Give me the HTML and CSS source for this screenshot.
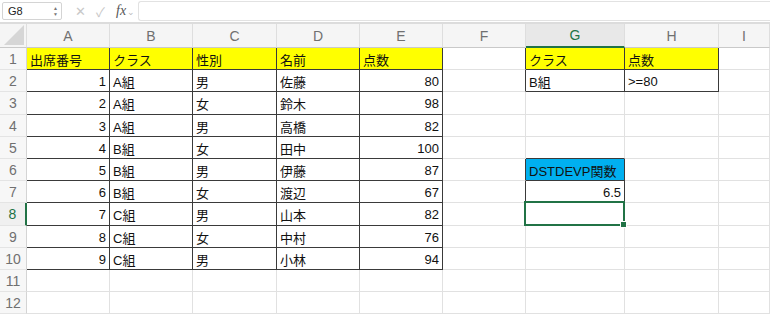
FILE: index.html
```html
<!DOCTYPE html>
<html>

<head>
  <title>DSTDEVP</title>
  <link rel="stylesheet" href="styles.css">
</head>

<body>

  <div class="toolbar">
    <div class="name-box">
      <span>G8</span>
      <span class="spin">&#9650;<br>&#9660;</span>
    </div>
    <span class="tool-icon">&#x2715;</span>
    <span class="tool-icon">&#x2713;</span>
    <span class="fx"><i>fx</i><small>&#x2304;</small></span>
    <div class="formula-input"></div>
  </div>

  <div class="sheet">
    <div class="row head">
      <div class="corner">
        <svg width="20" height="20" viewBox="0 0 20 20"><polygon points="20,0 20,20 0,20" fill="#d6d6d6"/></svg>
      </div>
      <div class="col">A</div>
      <div class="col">B</div>
      <div class="col">C</div>
      <div class="col">D</div>
      <div class="col">E</div>
      <div class="col">F</div>
      <div class="col sel">G</div>
      <div class="col">H</div>
      <div class="col">I</div>
    </div>

    <div class="row">
      <div class="num">1</div>
      <div class="c y br bb">出席番号</div>
      <div class="c y br bb">クラス</div>
      <div class="c y br bb">性別</div>
      <div class="c y br bb">名前</div>
      <div class="c y br bb">点数</div>
      <div class="c br"></div>
      <div class="c y br bb">クラス</div>
      <div class="c y br bb">点数</div>
      <div class="c"></div>
    </div>

    <div class="row">
      <div class="num">2</div>
      <div class="c r br bb">1</div>
      <div class="c br bb">A組</div>
      <div class="c br bb">男</div>
      <div class="c br bb">佐藤</div>
      <div class="c r br bb">80</div>
      <div class="c br"></div>
      <div class="c br bb">B組</div>
      <div class="c br bb">&gt;=80</div>
      <div class="c"></div>
    </div>

    <div class="row">
      <div class="num">3</div>
      <div class="c r br bb">2</div>
      <div class="c br bb">A組</div>
      <div class="c br bb">女</div>
      <div class="c br bb">鈴木</div>
      <div class="c r br bb">98</div>
      <div class="c"></div>
      <div class="c"></div>
      <div class="c"></div>
      <div class="c"></div>
    </div>

    <div class="row">
      <div class="num">4</div>
      <div class="c r br bb">3</div>
      <div class="c br bb">A組</div>
      <div class="c br bb">男</div>
      <div class="c br bb">高橋</div>
      <div class="c r br bb">82</div>
      <div class="c"></div>
      <div class="c"></div>
      <div class="c"></div>
      <div class="c"></div>
    </div>

    <div class="row">
      <div class="num">5</div>
      <div class="c r br bb">4</div>
      <div class="c br bb">B組</div>
      <div class="c br bb">女</div>
      <div class="c br bb">田中</div>
      <div class="c r br bb">100</div>
      <div class="c"></div>
      <div class="c bb"></div>
      <div class="c"></div>
      <div class="c"></div>
    </div>

    <div class="row">
      <div class="num">6</div>
      <div class="c r br bb">5</div>
      <div class="c br bb">B組</div>
      <div class="c br bb">男</div>
      <div class="c br bb">伊藤</div>
      <div class="c r br bb">87</div>
      <div class="c br"></div>
      <div class="c blue br bb">DSTDEVP関数</div>
      <div class="c"></div>
      <div class="c"></div>
    </div>

    <div class="row">
      <div class="num">7</div>
      <div class="c r br bb">6</div>
      <div class="c br bb">B組</div>
      <div class="c br bb">女</div>
      <div class="c br bb">渡辺</div>
      <div class="c r br bb">67</div>
      <div class="c br"></div>
      <div class="c r br bb">6.5</div>
      <div class="c"></div>
      <div class="c"></div>
    </div>

    <div class="row">
      <div class="num active">8</div>
      <div class="c r br bb">7</div>
      <div class="c br bb">C組</div>
      <div class="c br bb">男</div>
      <div class="c br bb">山本</div>
      <div class="c r br bb">82</div>
      <div class="c"></div>
      <div class="c current"></div>
      <div class="c"></div>
      <div class="c"></div>
    </div>

    <div class="row">
      <div class="num">9</div>
      <div class="c r br bb">8</div>
      <div class="c br bb">C組</div>
      <div class="c br bb">女</div>
      <div class="c br bb">中村</div>
      <div class="c r br bb">76</div>
      <div class="c"></div>
      <div class="c"></div>
      <div class="c"></div>
      <div class="c"></div>
    </div>

    <div class="row">
      <div class="num">10</div>
      <div class="c r br bb">9</div>
      <div class="c br bb">C組</div>
      <div class="c br bb">男</div>
      <div class="c br bb">小林</div>
      <div class="c r br bb">94</div>
      <div class="c"></div>
      <div class="c"></div>
      <div class="c"></div>
      <div class="c"></div>
    </div>

    <div class="row">
      <div class="num">11</div>
      <div class="c"></div>
      <div class="c"></div>
      <div class="c"></div>
      <div class="c"></div>
      <div class="c"></div>
      <div class="c"></div>
      <div class="c"></div>
      <div class="c"></div>
      <div class="c"></div>
    </div>

    <div class="row">
      <div class="num">12</div>
      <div class="c"></div>
      <div class="c"></div>
      <div class="c"></div>
      <div class="c"></div>
      <div class="c"></div>
      <div class="c"></div>
      <div class="c"></div>
      <div class="c"></div>
      <div class="c"></div>
    </div>
  </div>

</body>

</html>
```

FILE: styles.css
```css
body {
  font-family: "Liberation Sans", "Noto Sans CJK JP", sans-serif;
  margin: 0;
  padding: 0;
  background-color: #fff;
  overflow: hidden;
}

/* formula bar */
.toolbar {
  height: 22px;
  display: flex;
  align-items: center;
  border-bottom: 2px solid #dcdcdc;
  box-sizing: content-box;
  background-color: #fff;
}

.name-box {
  width: 60px;
  height: 18px;
  margin-left: 2px;
  border: 1px solid #d4d4d4;
  border-radius: 2px;
  display: flex;
  align-items: center;
  justify-content: space-between;
  font-size: 11px;
  color: #222;
  padding-left: 5px;
  box-sizing: border-box;
}

.name-box .spin {
  font-size: 5px;
  line-height: 6px;
  color: #777;
  margin-right: 3px;
}

.tool-icon {
  color: #c8c8c8;
  font-size: 13px;
  margin-left: 13px;
  width: 8px;
}

.fx {
  margin-left: 12px;
  color: #555;
  font-family: "Liberation Serif", serif;
  font-size: 14px;
}

.fx small {
  font-size: 9px;
  color: #bbb;
  margin-left: 1px;
}

.formula-input {
  flex: 1;
  height: 18px;
  margin-left: 3px;
  border: 1px solid #e2e2e2;
  border-right: none;
  border-radius: 3px 0 0 3px;
}

/* grid */
.sheet {
  width: 770px;
}

.row {
  display: grid;
  grid-template-columns: 27px 83px 83px 84px 83px 83px 83px 99px 94px 1fr;
  height: 22.2px;
}

.row.head {
  height: 24px;
}

.corner,
.col {
  background-color: #f5f5f5;
  border-right: 1px solid #dedede;
  border-bottom: 1px solid #c9c9c9;
  box-sizing: border-box;
}

.corner {
  display: flex;
  align-items: flex-end;
  justify-content: flex-end;
  padding: 0 2px 2px 0;
}

.col {
  display: flex;
  align-items: center;
  justify-content: center;
  font-size: 14px;
  color: #707070;
}

.col.sel {
  background-color: #e8e8e8;
  color: #217346;
  border-bottom: 2px solid #217346;
}

.num {
  background-color: #f7f7f7;
  border-right: 1px solid #d4d4d4;
  border-bottom: 1px solid #e4e4e4;
  box-sizing: border-box;
  display: flex;
  align-items: center;
  justify-content: center;
  font-size: 14px;
  color: #707070;
  padding-top: 1px;
}

.num.active {
  color: #217346;
  background-color: #f0f0f0;
  border-right: 2px solid #217346;
}

.c {
  border-right: 1px solid #e1e1e1;
  border-bottom: 1px solid #e1e1e1;
  box-sizing: border-box;
  font-size: 13px;
  color: #111;
  display: flex;
  align-items: center;
  padding: 2px 3px 0 3px;
  white-space: nowrap;
  position: relative;
}

.c.r {
  justify-content: flex-end;
}

.c.br {
  border-right-color: #3a3a3a;
}

.c.bb {
  border-bottom-color: #3a3a3a;
}

.c.y {
  background-color: #ffff00;
}

.c.blue {
  background-color: #00b0f0;
}

/* selected cell */
.c.current::after {
  content: "";
  position: absolute;
  left: -2px;
  top: -2px;
  right: -1px;
  bottom: -1px;
  border: 2px solid #217346;
}

.c.current::before {
  content: "";
  position: absolute;
  right: -3px;
  bottom: -3px;
  width: 5px;
  height: 5px;
  background-color: #217346;
  border: 1px solid #fff;
  z-index: 1;
}
```
